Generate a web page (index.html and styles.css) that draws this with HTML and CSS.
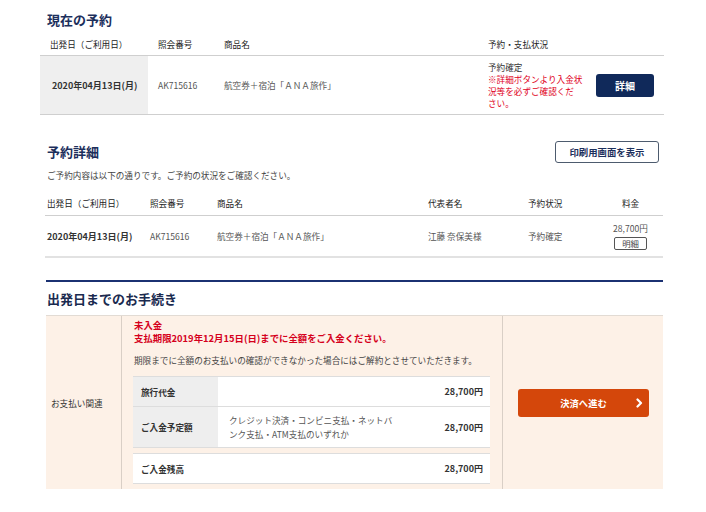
FILE: index.html
```html
<!DOCTYPE html>
<html lang="ja">
<head>
<meta charset="utf-8">
<title>予約確認</title>
<link rel="stylesheet" href="styles.css">
</head>
<body>
<div class="page">

  <section class="current">
    <h2 class="title">現在の予約</h2>
    <div class="cur-grid cur-head">
      <div class="c1">出発日（ご利用日）</div>
      <div class="c2">照会番号</div>
      <div class="c3">商品名</div>
      <div class="c4">予約・支払状況</div>
      <div class="c5"></div>
    </div>
    <div class="cur-grid cur-row">
      <div class="c1 date-cell">2020年04月13日(月)</div>
      <div class="c2">AK715616</div>
      <div class="c3 muted">航空券＋宿泊「ＡＮＡ旅作」</div>
      <div class="c4 status">
        <div>予約確定</div>
        <div class="red-note">※詳細ボタンより入金状<br>況等を必ずご確認くだ<br>さい。</div>
      </div>
      <div class="c5 btn-cell"><button class="btn-navy">詳細</button></div>
    </div>
  </section>

  <section class="detail">
    <div class="detail-top">
      <h2 class="title">予約詳細</h2>
      <button class="btn-outline">印刷用画面を表示</button>
    </div>
    <p class="desc">ご予約内容は以下の通りです。ご予約の状況をご確認ください。</p>
    <div class="det-grid det-head">
      <div class="d1">出発日（ご利用日）</div>
      <div class="d2">照会番号</div>
      <div class="d3">商品名</div>
      <div class="d4">代表者名</div>
      <div class="d5">予約状況</div>
      <div class="d6">料金</div>
    </div>
    <div class="det-grid det-row">
      <div class="d1 bold">2020年04月13日(月)</div>
      <div class="d2">AK715616</div>
      <div class="d3">航空券＋宿泊「ＡＮＡ旅作」</div>
      <div class="d4">江藤 奈保美様</div>
      <div class="d5">予約確定</div>
      <div class="d6 price">
        <div>28,700円</div>
        <button class="btn-mini">明細</button>
      </div>
    </div>
  </section>

  <section class="proc">
    <h2 class="title proc-title">出発日までのお手続き</h2>
    <div class="proc-box">
      <div class="proc-label">お支払い関連</div>
      <div class="proc-main">
        <div class="alert">
          <div>未入金</div>
          <div>支払期限2019年12月15日(日)までに全額をご入金ください。</div>
        </div>
        <p class="note">期限までに全額のお支払いの確認ができなかった場合にはご解約とさせていただきます。</p>
        <div class="pay-table">
          <div class="pay-row">
            <div class="pay-label">旅行代金</div>
            <div class="pay-desc"></div>
            <div class="pay-amt">28,700円</div>
          </div>
          <div class="pay-row tall">
            <div class="pay-label">ご入金予定額</div>
            <div class="pay-desc">クレジット決済・コンビニ支払・ネットバンク支払・ATM支払のいずれか</div>
            <div class="pay-amt">28,700円</div>
          </div>
        </div>
        <div class="pay-table balance">
          <div class="pay-row">
            <div class="pay-label plain">ご入金残高</div>
            <div class="pay-desc"></div>
            <div class="pay-amt">28,700円</div>
          </div>
        </div>
      </div>
      <div class="proc-action">
        <button class="btn-orange">決済へ進む
          <svg class="chev" width="7" height="10" viewBox="0 0 7 10"><polyline points="1.5,1.5 5,5 1.5,8.5" fill="none" stroke="#fff" stroke-width="2.2" stroke-linecap="round" stroke-linejoin="round"/></svg>
        </button>
      </div>
    </div>
  </section>

</div>
</body>
</html>
```

FILE: styles.css
```css
* { box-sizing: border-box; }
body {
  margin: 0;
  background: #fff;
  font-family: "Noto Sans CJK JP", "Noto Sans", sans-serif;
  font-size: 8.6px;
  color: #333;
}
.page {
  width: 624px;
  margin-left: 40px;
  padding-top: 11px;
}
.title {
  margin: 0;
  padding-left: 7px;
  font-size: 13px;
  line-height: 18px;
  font-weight: bold;
  color: #1c2f5c;
}
button {
  font-family: inherit;
  cursor: pointer;
}

/* current reservation */
.cur-grid {
  display: grid;
  grid-template-columns: 108px 66px 264px 112px 74px;
}
.cur-grid > div { padding-left: 10px; }
.cur-head {
  padding: 8px 0 4px;
  line-height: 14px;
  color: #222;
  border-bottom: 1px solid #cfcfcf;
}
.cur-row {
  height: 59px;
  border-bottom: 1px solid #cfcfcf;
  align-items: center;
  color: #555;
}
.cur-row > div { height: 100%; display: flex; align-items: center; }
.cur-row .date-cell {
  background: #efefef;
  padding-left: 12px;
  font-weight: bold;
  font-size: 9px;
  color: #333;
}
.cur-row .status {
  flex-direction: column;
  align-items: flex-start;
  justify-content: center;
  line-height: 12px;
  color: #333;
  padding-right: 4px;
}
.red-note { color: #e0001b; }
.muted { color: #555; }
.btn-cell { justify-content: center; padding-left: 0 !important; padding-right: 4px; }
.btn-navy {
  width: 58px;
  height: 23px;
  border: none;
  border-radius: 3px;
  background: #10295a;
  color: #fff;
  font-weight: bold;
  font-size: 10px;
  padding: 0;
}

/* detail */
.detail { margin-left: 5px; margin-right: 1px; }
.detail-top {
  margin-top: 26px;
  display: flex;
  justify-content: space-between;
  align-items: center;
  padding-right: 4px;
}
.detail-top .title { padding-left: 2px; }
.btn-outline {
  width: 104px;
  height: 22px;
  border: 1px solid #4d5b6e;
  border-radius: 3px;
  background: #fff;
  color: #1c2f5c;
  font-weight: bold;
  font-size: 9.4px;
  padding: 0;
}
.desc {
  margin: 5px 0 0 2px;
  line-height: 14px;
  color: #444;
}
.det-grid {
  display: grid;
  grid-template-columns: 103px 60px 210px 100px 80px 1fr;
}
.det-head {
  padding: 14px 0 5px;
  line-height: 14px;
  color: #222;
  border-bottom: 1px solid #cfcfcf;
}
.det-row {
  height: 42px;
  align-items: center;
  color: #555;
  border-bottom: 2px solid #e2e2e2;
}
.d1 { padding-left: 2px; }
.d2 { padding-left: 2px; }
.d3 { padding-left: 9px; }
.d4 { padding-left: 10px; }
.d5 { padding-left: 10px; }
.d6 { text-align: center; }
.bold { font-weight: bold; color: #333; font-size: 9px; }
.price {
  display: flex;
  flex-direction: column;
  align-items: center;
  line-height: 14px;
  padding-bottom: 2px;
}
.btn-mini {
  margin-top: 2px;
  width: 33px;
  height: 13px;
  border: 1px solid #555;
  border-radius: 2px;
  background: #fff;
  color: #444;
  font-size: 8.4px;
  line-height: 11px;
  padding: 0;
}

/* procedures */
.proc {
  margin-top: 22px;
  margin-left: 6px;
  margin-right: 1px;
  border-top: 2px solid #1b3172;
}
.proc-title {
  margin-top: 8px;
  padding-left: 1px;
  color: #1a2a4f;
}
.proc-box {
  margin-top: 7px;
  display: grid;
  grid-template-columns: 76px 381px 1fr;
  background: #fdf1e7;
  border-top: 1px solid #e2dbd4;
  height: 174px;
}
.proc-label {
  display: flex;
  align-items: center;
  padding-left: 5px;
  color: #333;
  border-right: 1px solid #d9cfc6;
}
.proc-main {
  padding: 3px 12px 0 11px;
  border-right: 1px solid #d9cfc6;
}
.alert {
  padding-left: 1px;
  color: #d5001c;
  font-weight: bold;
  font-size: 9.4px;
  line-height: 13px;
}
.note {
  margin: 8px 0 0 1px;
  line-height: 14px;
  color: #444;
}
.pay-table {
  margin-top: 9px;
  background: #fff;
  border-top: 1px solid #ddd;
}
.pay-row {
  display: grid;
  grid-template-columns: 85px 188px 1fr;
  height: 30px;
  border-bottom: 1px solid #ddd;
}
.pay-row.tall { height: 41px; }
.pay-row > div { display: flex; align-items: center; }
.pay-label {
  background: #eeeeee;
  padding-left: 8px;
  font-weight: bold;
  color: #333;
}
.pay-label.plain { background: #fff; }
.pay-desc {
  padding: 0 10px 0 11px;
  line-height: 14px;
  color: #555;
}
.pay-amt {
  justify-content: flex-end;
  padding-right: 7px;
  font-weight: bold;
  font-size: 9px;
  color: #333;
}
.pay-table.balance { margin-top: 5px; }
.proc-action {
  display: flex;
  align-items: center;
  padding-left: 15px;
}
.btn-orange {
  position: relative;
  width: 131px;
  height: 28px;
  border: none;
  border-radius: 3px;
  background: #d4470b;
  color: #fff;
  font-weight: bold;
  font-size: 9.3px;
  padding: 0;
}
.chev {
  position: absolute;
  right: 6px;
  top: 9px;
}
```
